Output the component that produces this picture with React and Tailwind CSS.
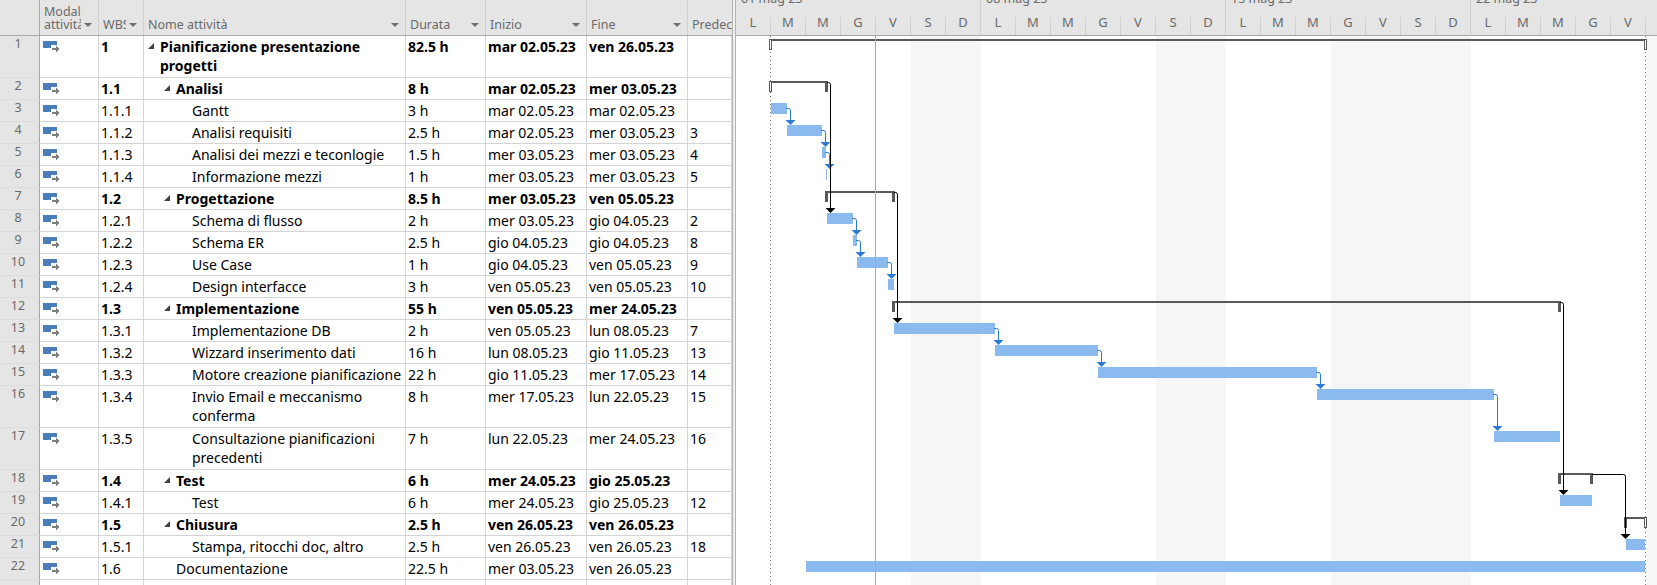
const ROWS = [
  { n: 1, wbs: "1", name: "Pianificazione presentazione progetti", dur: "82.5 h", start: "mar 02.05.23", end: "ven 26.05.23", pred: "", bold: true, tall: true, indent: "pl-[4px]" },
  { n: 2, wbs: "1.1", name: "Analisi", dur: "8 h", start: "mar 02.05.23", end: "mer 03.05.23", pred: "", bold: true, indent: "pl-[20px]" },
  { n: 3, wbs: "1.1.1", name: "Gantt", dur: "3 h", start: "mar 02.05.23", end: "mar 02.05.23", pred: "", indent: "pl-[48px]" },
  { n: 4, wbs: "1.1.2", name: "Analisi requisiti", dur: "2.5 h", start: "mar 02.05.23", end: "mer 03.05.23", pred: "3", indent: "pl-[48px]" },
  { n: 5, wbs: "1.1.3", name: "Analisi dei mezzi e teconlogie", dur: "1.5 h", start: "mer 03.05.23", end: "mer 03.05.23", pred: "4", indent: "pl-[48px]" },
  { n: 6, wbs: "1.1.4", name: "Informazione mezzi", dur: "1 h", start: "mer 03.05.23", end: "mer 03.05.23", pred: "5", indent: "pl-[48px]" },
  { n: 7, wbs: "1.2", name: "Progettazione", dur: "8.5 h", start: "mer 03.05.23", end: "ven 05.05.23", pred: "", bold: true, indent: "pl-[20px]" },
  { n: 8, wbs: "1.2.1", name: "Schema di flusso", dur: "2 h", start: "mer 03.05.23", end: "gio 04.05.23", pred: "2", indent: "pl-[48px]" },
  { n: 9, wbs: "1.2.2", name: "Schema ER", dur: "2.5 h", start: "gio 04.05.23", end: "gio 04.05.23", pred: "8", indent: "pl-[48px]" },
  { n: 10, wbs: "1.2.3", name: "Use Case", dur: "1 h", start: "gio 04.05.23", end: "ven 05.05.23", pred: "9", indent: "pl-[48px]" },
  { n: 11, wbs: "1.2.4", name: "Design interfacce", dur: "3 h", start: "ven 05.05.23", end: "ven 05.05.23", pred: "10", indent: "pl-[48px]" },
  { n: 12, wbs: "1.3", name: "Implementazione", dur: "55 h", start: "ven 05.05.23", end: "mer 24.05.23", pred: "", bold: true, indent: "pl-[20px]" },
  { n: 13, wbs: "1.3.1", name: "Implementazione DB", dur: "2 h", start: "ven 05.05.23", end: "lun 08.05.23", pred: "7", indent: "pl-[48px]" },
  { n: 14, wbs: "1.3.2", name: "Wizzard inserimento dati", dur: "16 h", start: "lun 08.05.23", end: "gio 11.05.23", pred: "13", indent: "pl-[48px]" },
  { n: 15, wbs: "1.3.3", name: "Motore creazione pianificazione", dur: "22 h", start: "gio 11.05.23", end: "mer 17.05.23", pred: "14", indent: "pl-[48px]" },
  { n: 16, wbs: "1.3.4", name: "Invio Email e meccanismo conferma", dur: "8 h", start: "mer 17.05.23", end: "lun 22.05.23", pred: "15", tall: true, indent: "pl-[48px]" },
  { n: 17, wbs: "1.3.5", name: "Consultazione pianificazioni precedenti", dur: "7 h", start: "lun 22.05.23", end: "mer 24.05.23", pred: "16", tall: true, indent: "pl-[48px]" },
  { n: 18, wbs: "1.4", name: "Test", dur: "6 h", start: "mer 24.05.23", end: "gio 25.05.23", pred: "", bold: true, indent: "pl-[20px]" },
  { n: 19, wbs: "1.4.1", name: "Test", dur: "6 h", start: "mer 24.05.23", end: "gio 25.05.23", pred: "12", indent: "pl-[48px]" },
  { n: 20, wbs: "1.5", name: "Chiusura", dur: "2.5 h", start: "ven 26.05.23", end: "ven 26.05.23", pred: "", bold: true, indent: "pl-[20px]" },
  { n: 21, wbs: "1.5.1", name: "Stampa, ritocchi doc, altro", dur: "2.5 h", start: "ven 26.05.23", end: "ven 26.05.23", pred: "18", indent: "pl-[48px]" },
  { n: 22, wbs: "1.6", name: "Documentazione", dur: "22.5 h", start: "mer 03.05.23", end: "ven 26.05.23", pred: "", plain: true, indent: "pl-[32px]" },
];

const WEEKS = [
  { label: "01 mag 23", days: ["L", "M", "M", "G", "V", "S", "D"] },
  { label: "08 mag 23", days: ["L", "M", "M", "G", "V", "S", "D"] },
  { label: "15 mag 23", days: ["L", "M", "M", "G", "V", "S", "D"] },
  { label: "22 mag 23", days: ["L", "M", "M", "G", "V", "S", "D"] },
];

const COLS = "grid grid-cols-[40px_59px_45px_262px_80px_101px_101px_44px]";
const FONT = "font-['Noto_Sans',sans-serif]";

// x0, x1, top y in page coordinates
const BARS = [
  [771, 787, 103], [787, 822, 125], [822, 826, 147], [826, 827, 169],
  [827, 853, 213], [853, 857, 235], [857, 888, 257], [888, 894, 279],
  [894, 995, 323], [995, 1098, 345], [1098, 1317, 367], [1317, 1494, 389], [1494, 1560, 431],
  [1560, 1592, 495], [1626, 1645, 539], [806, 1645, 561],
];

// x0, x1, top y, left hollow, right hollow
const SUMMARIES = [
  [769, 1647, 39, true, true],
  [769, 828, 81, true, false],
  [825, 895, 191, false, false],
  [892, 1561, 301, false, false],
  [1558, 1593, 473, false, false],
  [1624, 1647, 517, false, true],
];

// from x, from y, turn x, arrow tip y
const LINKS = [
  [787, 108.5, 790.5, 125], [822, 130.5, 825.5, 147], [826, 152.5, 829.5, 169],
  [853, 218.5, 856.5, 235], [857, 240.5, 860.5, 257], [888, 262.5, 891.5, 279],
  [995, 328.5, 998.5, 345], [1098, 350.5, 1101.5, 367], [1317, 372.5, 1320.5, 389],
  [1494, 394.5, 1497.5, 431],
];

const BLACK_LINKS = [
  [828, 82.5, 830.5, 213], [895, 192.5, 897.5, 323],
  [1561, 302.5, 1563.5, 495], [1593, 474.5, 1625.5, 539],
];

function ModeIcon() {
  return (
    <svg width="17" height="12" viewBox="0 0 17 12" className="block" shapeRendering="crispEdges">
      <rect x="0" y="0" width="14" height="7" fill="#4a7ebb" />
      <rect x="8" y="4" width="9" height="8" fill="#ffffff" />
      <path d="M9 7h4V5h1v1h1v1h1v2h-1v1h-1v1h-1V9H9z" fill="#7f7f7f" />
    </svg>
  );
}

function Caret() {
  return <span className="mb-[4px] ml-auto h-0 w-0 shrink-0 border-x-[4px] border-t-[4px] border-x-transparent border-t-[#6f6f6f]" />;
}

function HeaderCell({ children, lines }) {
  return (
    <div className="flex h-[35px] items-end gap-[3px] overflow-hidden border-r border-[#d0d0d0] pb-[4px] pl-[4px] pr-[6px]">
      <div className="min-w-0 overflow-hidden whitespace-nowrap text-[12.5px] leading-[13px] text-[#6a6a6a]">
        {lines ? lines.map((l) => <div key={l}>{l}</div>) : children}
      </div>
      <Caret />
    </div>
  );
}

function Collapse() {
  return (
    <svg width="6" height="6" viewBox="0 0 6 6" className="mt-[6px] mr-[6px] shrink-0">
      <polygon points="6,0 6,6 0,6" fill="#404040" />
    </svg>
  );
}

function Row({ row }) {
  const cell = `border-r border-b border-[#d4d4d4] pl-[2px] pt-px leading-[19px] overflow-hidden whitespace-nowrap`;
  const weight = row.bold ? "font-bold" : "";
  return (
    <div className={`${COLS} ${row.tall ? "h-[42px]" : "h-[22px]"} text-[14px] text-black`}>
      <div className="border-r border-b border-r-[#a8a8a8] border-b-[#dcdcdc] bg-[#e5e5e5] pr-[3px] pt-px text-center text-[12.5px] leading-[14px] text-[#6a6a6a]">
        {row.n}
      </div>
      <div className="border-r border-b border-[#d4d4d4] pl-[3px] pt-[5px]">
        <ModeIcon />
      </div>
      <div className={`${cell} ${weight}`}>{row.wbs}</div>
      <div className={`flex border-r border-b border-[#d4d4d4] pt-px leading-[19px] ${row.indent} ${weight}`}>
        {row.bold && <Collapse />}
        <span className={row.tall ? "whitespace-normal" : "whitespace-nowrap"}>{row.name}</span>
      </div>
      <div className={`${cell} ${weight}`}>{row.dur}</div>
      <div className={`${cell} ${weight}`}>{row.start}</div>
      <div className={`${cell} ${weight}`}>{row.end}</div>
      <div className={cell}>{row.pred}</div>
    </div>
  );
}

function EmptyRow() {
  return (
    <div className={`${COLS} h-[22px]`}>
      <div className="border-r border-r-[#a8a8a8] bg-[#e5e5e5]" />
      {[0, 1, 2, 3, 4, 5, 6].map((i) => (
        <div key={i} className="border-r border-[#d4d4d4]" />
      ))}
    </div>
  );
}

function Timescale() {
  return (
    <div className="flex h-[36px] w-[980px] border-b border-[#a8a8a8] bg-[#e5e5e5] text-[#6a6a6a]">
      {WEEKS.map((w) => (
        <div key={w.label} className="flex w-[245px] shrink-0 flex-col">
          <div className="h-[17px] overflow-hidden border-r border-[#d0d0d0] pl-[5px] text-[12.5px] leading-[16px]">
            <div className="-mt-[9px] whitespace-nowrap">{w.label}</div>
          </div>
          <div className="flex h-[18px]">
            {w.days.map((d, i) => (
              <div key={i} className="w-[35px] shrink-0 border-r border-[#d0d0d0] text-center text-[13px] leading-[10px]">
                {d}
              </div>
            ))}
          </div>
        </div>
      ))}
    </div>
  );
}

function Arrow({ x, tip, fill }) {
  const cx = Math.floor(x);
  return <path d={`M${cx - 4.5} ${tip - 5}h10l-5 5z`} fill={fill} />;
}

function Link({ link, color, width }) {
  const [x0, y, tx, tip] = link;
  return (
    <g>
      <path d={`M${x0 - 1} ${y}H${tx - 2}Q${tx} ${y} ${tx} ${y + 2}V${tip - 4}`} fill="none" stroke={color} strokeWidth={width} />
      <Arrow x={tx} tip={tip} fill={color} />
    </g>
  );
}

function Summary({ s }) {
  const [x0, x1, y, hollowL, hollowR] = s;
  const c = "#595959";
  return (
    <g shapeRendering="crispEdges">
      <rect x={x0} y={y} width={x1 - x0} height="2" fill={c} />
      {hollowL ? (
        <rect x={x0 + 0.5} y={y + 0.5} width="2" height="10" fill="#ffffff" stroke={c} />
      ) : (
        <rect x={x0} y={y} width="3" height="11" fill={c} />
      )}
      {hollowR ? (
        <rect x={x1 - 2.5} y={y + 0.5} width="2" height="10" fill="#ffffff" stroke={c} />
      ) : (
        <rect x={x1 - 3} y={y} width="3" height="11" fill={c} />
      )}
    </g>
  );
}

function GanttChart() {
  return (
    <svg width="921" height="549" viewBox="736 36 921 549" className="block">
      <g shapeRendering="crispEdges">
        <rect x="911" y="36" width="70" height="549" fill="#f6f6f6" />
        <rect x="1156" y="36" width="70" height="549" fill="#f6f6f6" />
        <rect x="1331" y="36" width="140" height="549" fill="#f6f6f6" />
        <rect x="1646" y="36" width="11" height="549" fill="#f6f6f6" />
        <line x1="770.5" y1="36" x2="770.5" y2="585" stroke="#7a7a7a" strokeDasharray="1 3" />
        <line x1="1645.5" y1="36" x2="1645.5" y2="585" stroke="#7a7a7a" strokeDasharray="1 3" />
        {BARS.map(([a, b, y]) => (
          <rect key={`${a}-${y}`} x={a} y={y} width={b - a} height="11" fill="#8abaee" />
        ))}
      </g>
      {SUMMARIES.map((s) => (
        <Summary key={s[2]} s={s} />
      ))}
      {LINKS.map((l) => (
        <Link key={l[1]} link={l} color="#2a7bd6" width="1" />
      ))}
      {BLACK_LINKS.map((l) => (
        <Link key={l[1]} link={l} color="#000000" width="1" />
      ))}
      <rect x="875" y="36" width="1" height="549" fill="#8dbb8d" shapeRendering="crispEdges" />
    </svg>
  );
}

export default function App() {
  return (
    <div className={`flex h-[585px] w-[1657px] overflow-hidden bg-white ${FONT}`}>
      <div className="w-[732px] shrink-0 overflow-hidden">
        <div className={`${COLS} h-[36px] border-b border-[#a8a8a8] bg-[#e5e5e5]`}>
          <div className="border-r border-[#a8a8a8]" />
          <HeaderCell lines={["Modalità", "attività"]} />
          <HeaderCell>WBS</HeaderCell>
          <HeaderCell>Nome attività</HeaderCell>
          <HeaderCell>Durata</HeaderCell>
          <HeaderCell>Inizio</HeaderCell>
          <HeaderCell>Fine</HeaderCell>
          <div className="flex h-[35px] items-end overflow-hidden whitespace-nowrap pb-[4px] pl-[4px] text-[12.5px] leading-[13px] text-[#6a6a6a]">
            Predecessori
          </div>
        </div>
        {ROWS.map((r) => (
          <Row key={r.n} row={r} />
        ))}
        <EmptyRow />
      </div>
      <div className="w-[4px] shrink-0 border-x border-x-[#b4b4b4] bg-[#f0f0f0]" />
      <div className="min-w-0 flex-1 overflow-hidden">
        <Timescale />
        <GanttChart />
      </div>
    </div>
  );
}
